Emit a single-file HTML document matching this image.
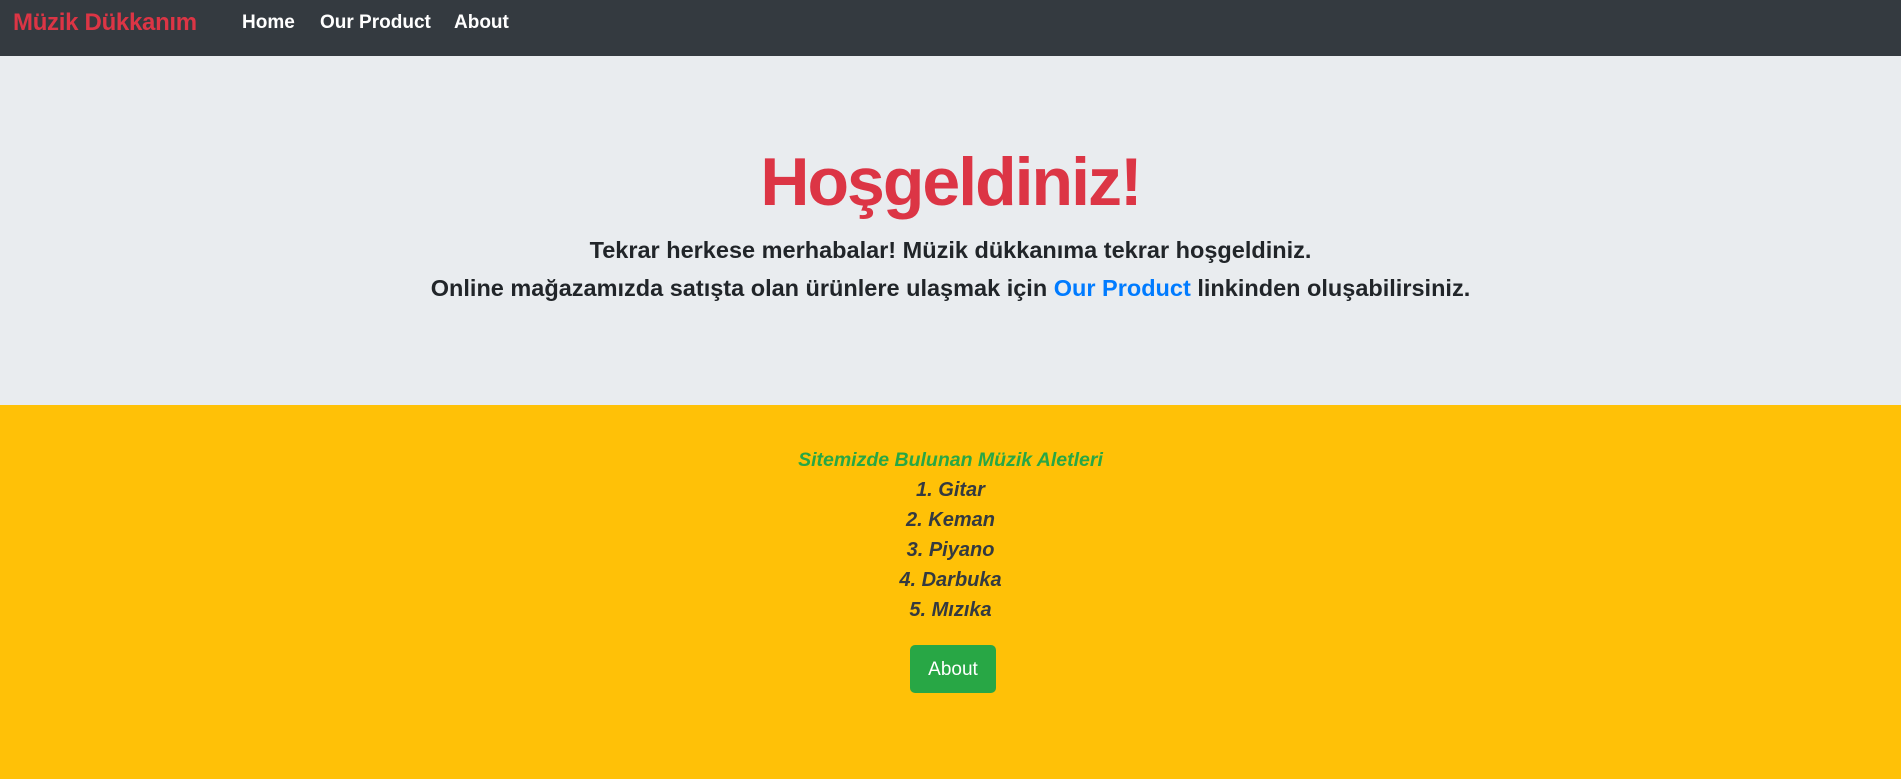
<!DOCTYPE html>
<html><head><meta charset="utf-8"><style>
*{margin:0;padding:0;box-sizing:border-box}
body{width:1901px;height:779px;overflow:hidden;font-family:"Liberation Sans",sans-serif;background:#ffc107}
nav{height:56px;background:#343a40;position:relative}
nav span{position:absolute;top:0;line-height:46px;font-weight:bold}
.brand{left:13px;color:#dc3545;font-size:24px;letter-spacing:-0.3px}
.l{color:#fff;font-size:19px}
.jum{height:349px;background:#e9ecef;position:relative;text-align:center;color:#212529}
.jum h1{position:absolute;left:0;right:0;top:86px;line-height:80px;font-size:68px;color:#dc3545;letter-spacing:-2px}
.jum p{position:absolute;left:0;right:0;font-weight:bold;font-size:23.5px;line-height:30px}
.y{text-align:center;color:#343a40;font-style:italic;font-weight:bold;position:relative;height:374px}
.y div{position:absolute;left:0;right:0;font-size:20px;line-height:30px}
.y .btn{position:absolute;left:910px;right:auto;top:240px;width:86px;height:48px;background:#28a745;border-radius:5px;color:#fff;font-size:19px;line-height:50px;text-align:center;font-style:normal;font-weight:normal}
</style></head><body>
<nav><span class="brand">Müzik Dükkanım</span><span class="l" style="left:242px">Home</span><span class="l" style="left:320px">Our Product</span><span class="l" style="left:454px">About</span></nav>
<div class="jum">
<h1>Hoşgeldiniz!</h1>
<p style="top:179px">Tekrar herkese merhabalar! Müzik dükkanıma tekrar hoşgeldiniz.</p>
<p style="top:217px">Online mağazamızda satışta olan ürünlere ulaşmak için <span style="color:#007bff">Our Product</span> linkinden oluşabilirsiniz.</p>
</div>
<div class="y">
<div style="top:40px;color:#28a745;font-size:19.5px">Sitemizde Bulunan Müzik Aletleri</div>
<div style="top:70px">1. Gitar</div>
<div style="top:100px">2. Keman</div>
<div style="top:130px">3. Piyano</div>
<div style="top:160px">4. Darbuka</div>
<div style="top:190px">5. Mızıka</div>
<div class="btn">About</div>
</div>
</body></html>
